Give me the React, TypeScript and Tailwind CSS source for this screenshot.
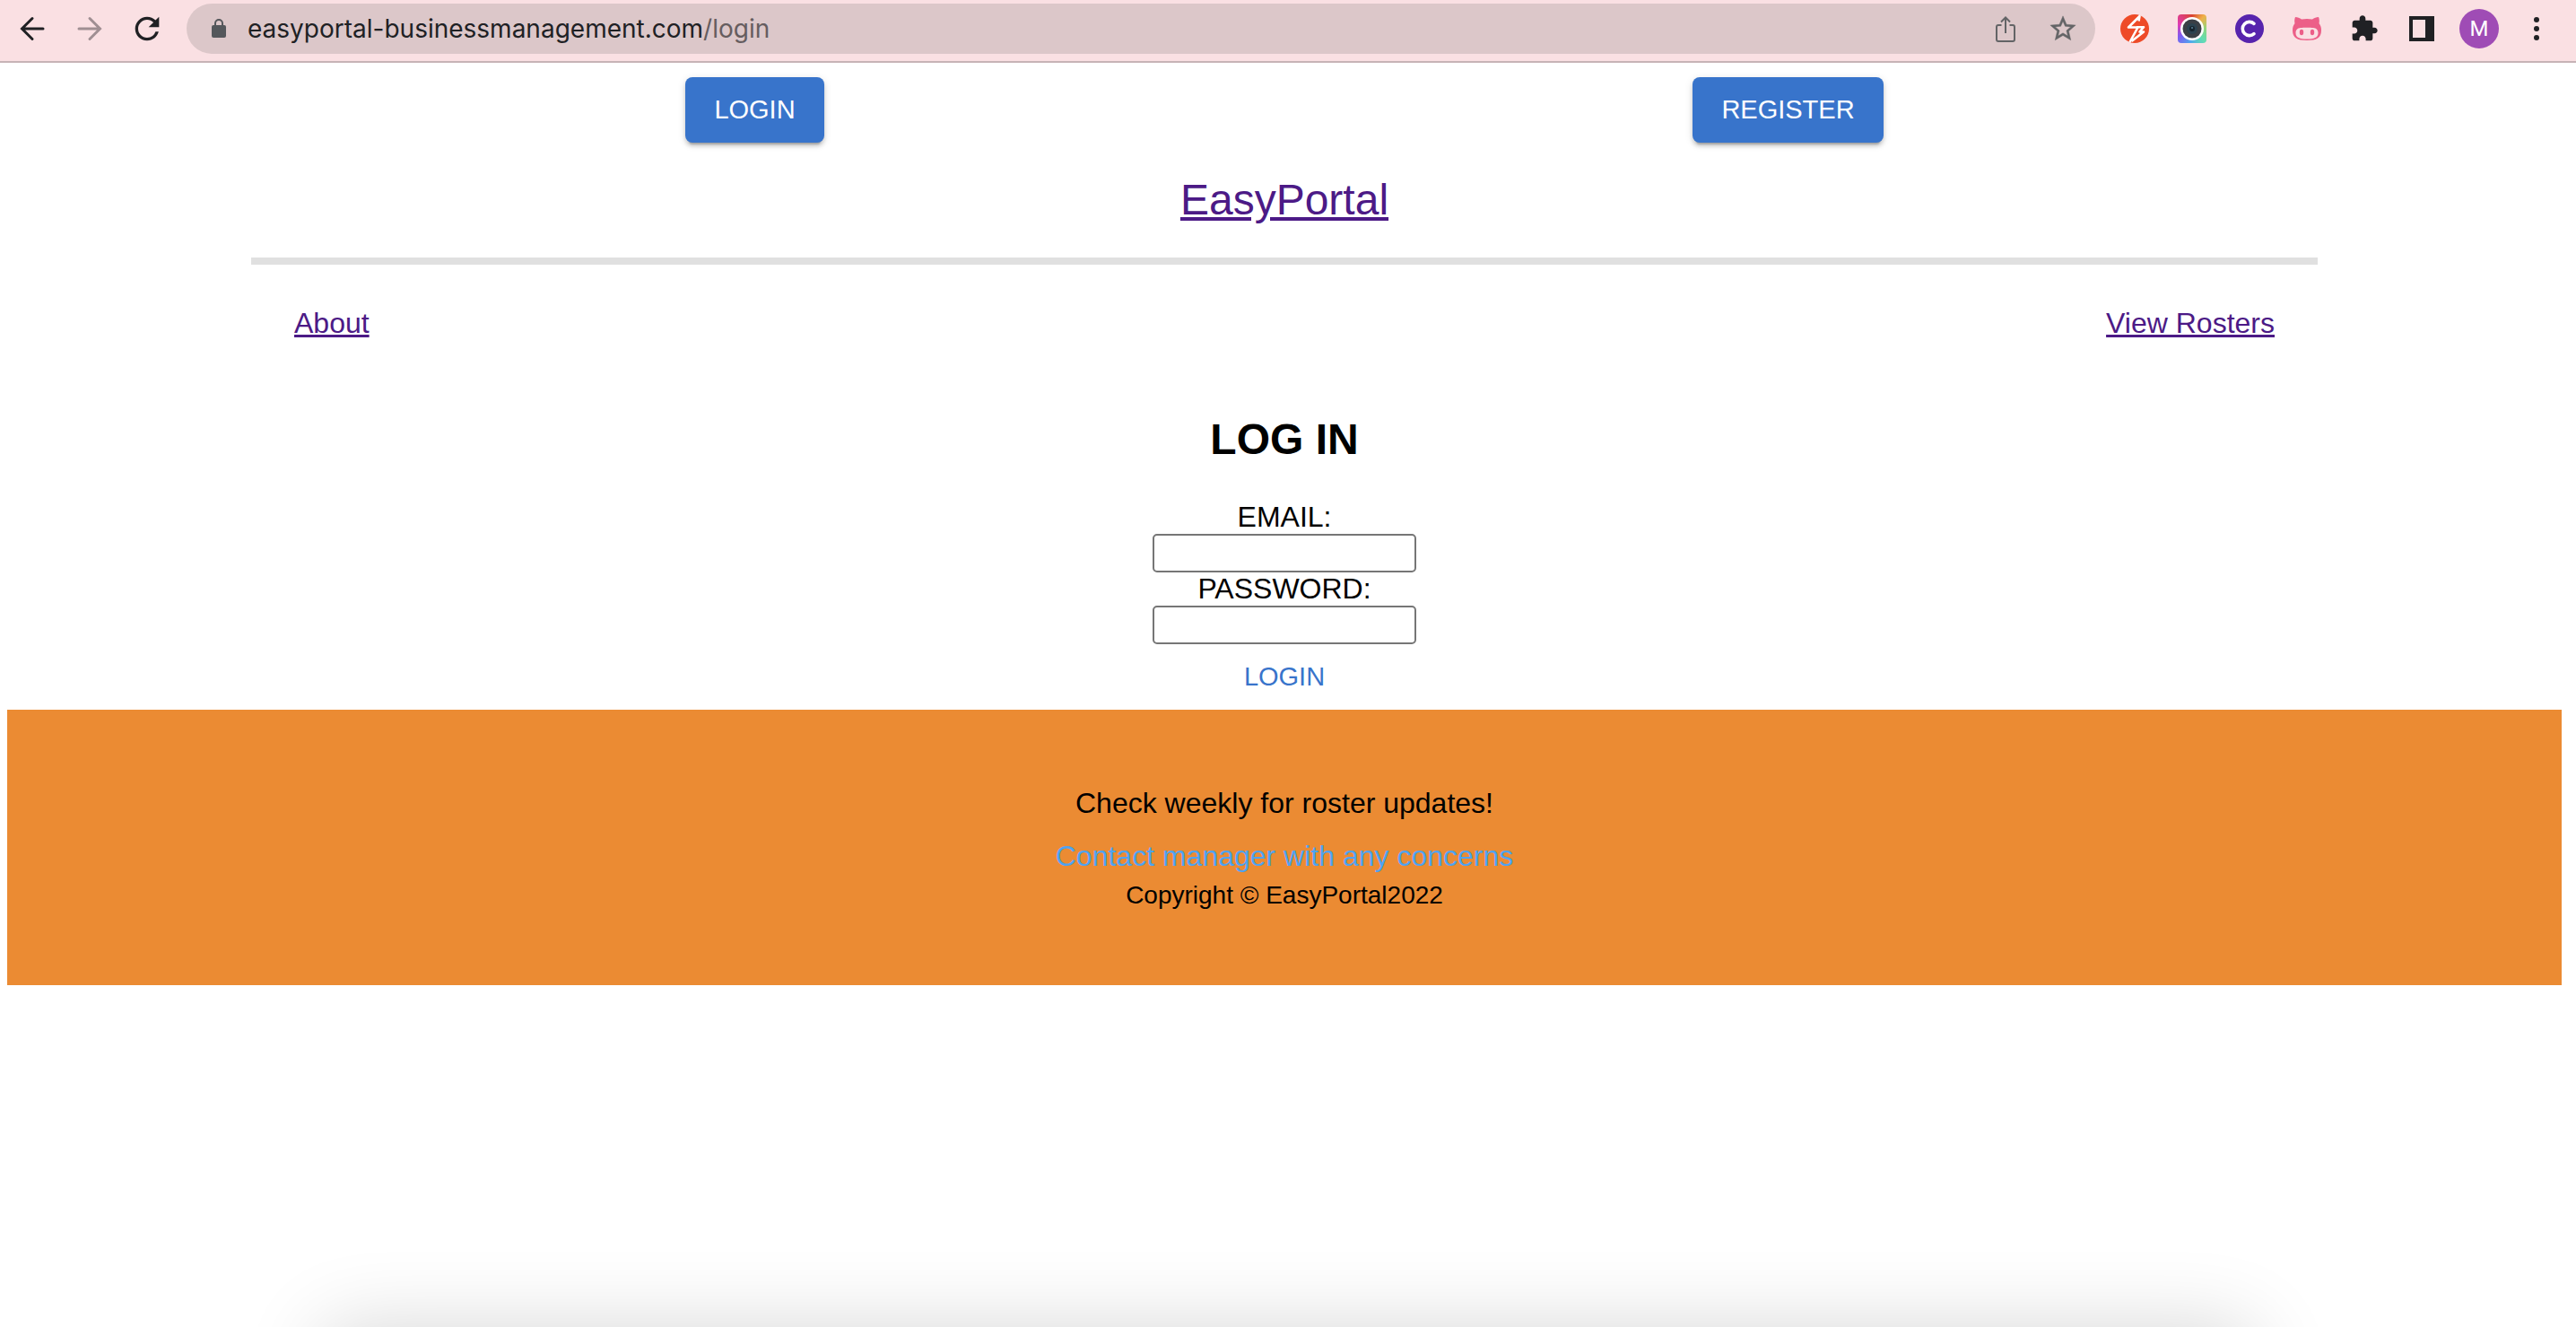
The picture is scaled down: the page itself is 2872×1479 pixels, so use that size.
import type { ReactNode } from "react";

function ToolButton({ label, children }: { label: string; children: ReactNode }) {
  return (
    <button
      type="button"
      aria-label={label}
      className="flex h-14 w-16 shrink-0 items-center justify-center text-[#202124]"
    >
      {children}
    </button>
  );
}

function BackIcon({ flipped = false }: { flipped?: boolean }) {
  return (
    <svg
      viewBox="0 0 32 32"
      className={flipped ? "size-8 rotate-180 text-[#a08f93]" : "size-8"}
      fill="none"
      stroke="currentColor"
      strokeWidth="3"
      strokeLinecap="round"
    >
      <path d="M28 16H5M16 4.500L4.500 16 16 27.500" />
    </svg>
  );
}

function ReloadIcon() {
  return (
    <svg viewBox="0 0 24 24" className="size-10" fill="currentColor">
      <path d="M17.65 6.35A7.96 7.96 0 0 0 12 4c-4.42 0-7.99 3.58-7.99 8s3.57 8 7.99 8c3.73 0 6.84-2.55 7.73-6h-2.08A5.99 5.99 0 0 1 12 18c-3.31 0-6-2.69-6-6s2.69-6 6-6c1.66 0 3.14.69 4.22 1.78L13 11h7V4l-2.35 2.35z" />
    </svg>
  );
}

function LockIcon() {
  return (
    <svg viewBox="0 0 16 22" className="h-[22px] w-4 text-[#54575b]">
      <rect x="0" y="7" width="16" height="14" rx="2" fill="currentColor" />
      <path d="M4 8V5a4 4 0 0 1 8 0v3" fill="none" stroke="currentColor" strokeWidth="2" />
    </svg>
  );
}

function ShareIcon() {
  return (
    <svg
      viewBox="0 0 32 32"
      className="size-8 text-[#636466]"
      fill="none"
      stroke="currentColor"
      strokeWidth="2"
    >
      <path d="M11.5 12H8a2 2 0 0 0-2 2v14a2 2 0 0 0 2 2h16a2 2 0 0 0 2-2V14a2 2 0 0 0-2-2h-3.500M16 21V4M11 8.500l5-5 5 5" />
    </svg>
  );
}

function StarIcon() {
  return (
    <svg
      viewBox="0 0 24 24"
      className="size-[34px] text-[#636466]"
      fill="currentColor"
      stroke="currentColor"
      strokeWidth="0.3"
    >
      <path
        fillRule="evenodd"
        d="M22 9.240l-7.190-.620L12 2 9.190 8.630 2 9.240l5.460 4.730L5.820 21 12 17.270 18.180 21l-1.630-7.030L22 9.240zM12 15.400l-3.760 2.270 1-4.280-3.320-2.880 4.380-.380L12 6.100l1.710 4.040 4.380.380-3.320 2.880 1 4.280L12 15.400z"
      />
    </svg>
  );
}

function SlashBadgeIcon() {
  return (
    <svg viewBox="0 0 32 32" className="size-8">
      <circle cx="16" cy="16" r="16" fill="#ee4b28" />
      <path
        d="M20.500 7.500L21.500 2 9 14.500h10.500L10.500 31M18 14.200h8l-4.500 5.300H26L12.500 30"
        fill="none"
        stroke="#fff"
        strokeWidth="2.6"
        strokeLinejoin="round"
      />
    </svg>
  );
}

function CameraIcon() {
  return (
    <span className="flex size-8 items-center justify-center rounded-sm bg-[conic-gradient(from_0deg,#d9432f,#f0b04a_12%,#8fd67c_25%,#62dcb4_38%,#4fa8ee_52%,#7d5cf0_66%,#e03bb4_80%,#d9432f)]">
      <svg viewBox="0 0 26 26" className="size-[26px]">
        <circle cx="13" cy="13" r="13" fill="#fff" />
        <circle cx="13" cy="13" r="10.500" fill="#3b3f46" />
        <circle cx="13" cy="13" r="6" fill="#2c4250" />
        <circle cx="13" cy="13" r="3" fill="#18242e" />
        <circle cx="13" cy="12" r="1" fill="#5b8298" />
      </svg>
    </span>
  );
}

function LetterCIcon() {
  return (
    <svg viewBox="0 0 32 32" className="size-8">
      <circle cx="16" cy="16" r="16" fill="#5724ad" />
      <path
        d="M21 10.400a7.600 7.600 0 1 0 0 11.200"
        fill="none"
        stroke="#fff"
        strokeWidth="3.600"
        strokeLinecap="round"
      />
    </svg>
  );
}

function CatIcon() {
  return (
    <svg viewBox="0 0 32 32" className="size-8">
      <path
        d="M3 3c2.500 0 5 1 7 2.500 4-.700 8-.700 12 0C24 4 26.500 3 29 3c1 2.500 1 5 .5 7 2 2.500 2.500 5 2.500 8 0 8-5 11-16 11S0 26 0 18c0-3 .500-5.500 2.500-8C2 8 2 5.500 3 3z"
        fill="#ec5f88"
      />
      <path
        d="M9 15c3-.500 11-.500 14 0 3.500.300 5.500 2.500 5.500 5.500 0 5.500-4.500 7-12.500 7S3.500 26 3.500 20.500C3.500 17.500 5.500 15.300 9 15z"
        fill="#fae0e3"
      />
      <ellipse cx="10" cy="20" rx="2.200" ry="3.200" fill="#ec5f88" />
      <ellipse cx="22" cy="20" rx="2.200" ry="3.200" fill="#ec5f88" />
    </svg>
  );
}

function PuzzleIcon() {
  return (
    <svg viewBox="0 0 24 24" className="size-8" fill="currentColor">
      <path d="M20.500 11H19V7c0-1.100-.900-2-2-2h-4V3.500C13 2.120 11.880 1 10.500 1S8 2.120 8 3.500V5H4c-1.100 0-1.990.900-1.990 2v3.800H3.500c1.490 0 2.700 1.210 2.700 2.700s-1.210 2.700-2.700 2.700H2V20c0 1.100.900 2 2 2h3.800v-1.500c0-1.490 1.210-2.700 2.700-2.700 1.490 0 2.700 1.210 2.700 2.700V22H17c1.100 0 2-.900 2-2v-4h1.500c1.380 0 2.500-1.120 2.500-2.500S21.880 11 20.500 11z" />
    </svg>
  );
}

function PanelIcon() {
  return (
    <svg viewBox="0 0 28 28" className="size-7">
      <path d="M0 0h28v28H0zM4 4v20h14V4z" fill="currentColor" fillRule="evenodd" />
    </svg>
  );
}

function MenuIcon() {
  return (
    <svg viewBox="0 0 32 32" className="size-8" fill="currentColor">
      <circle cx="16" cy="6" r="3" />
      <circle cx="16" cy="16" r="3" />
      <circle cx="16" cy="26" r="3" />
    </svg>
  );
}

function BrowserBar() {
  return (
    <header className="flex items-center gap-3 border-b-2 border-[#c7b3b6] bg-[#fae0e3] pt-1 pr-3 pb-2 pl-1">
      <div className="flex">
        <ToolButton label="Back">
          <BackIcon />
        </ToolButton>
        <ToolButton label="Forward">
          <BackIcon flipped />
        </ToolButton>
        <ToolButton label="Reload">
          <ReloadIcon />
        </ToolButton>
      </div>
      <div className="flex h-14 min-w-0 flex-1 items-center rounded-full bg-[#dcc7c9] pr-1 pl-7">
        <LockIcon />
        <p className="ml-6 flex-1 truncate font-[Inter,sans-serif] text-[28px] leading-9 text-[#202124]">
          easyportal-businessmanagement.com
          <span className="text-[#665d5f]">/login</span>
        </p>
        <ToolButton label="Share">
          <ShareIcon />
        </ToolButton>
        <ToolButton label="Bookmark">
          <StarIcon />
        </ToolButton>
      </div>
      <div className="flex">
        <ToolButton label="Slash extension">
          <SlashBadgeIcon />
        </ToolButton>
        <ToolButton label="Camera extension">
          <CameraIcon />
        </ToolButton>
        <ToolButton label="C extension">
          <LetterCIcon />
        </ToolButton>
        <ToolButton label="Cat extension">
          <CatIcon />
        </ToolButton>
        <ToolButton label="Extensions">
          <PuzzleIcon />
        </ToolButton>
        <ToolButton label="Side panel">
          <PanelIcon />
        </ToolButton>
        <ToolButton label="Profile">
          <span className="flex size-11 items-center justify-center rounded-full bg-[#9f4cb5] font-[Roboto,sans-serif] text-2xl text-white">
            M
          </span>
        </ToolButton>
        <ToolButton label="Menu">
          <MenuIcon />
        </ToolButton>
      </div>
    </header>
  );
}

function ContainedButton({ children }: { children: ReactNode }) {
  return (
    <button
      type="button"
      className="rounded-lg bg-[#3874cb] px-8 py-3 text-[29px] leading-[49px] text-white shadow-[0_6px_2px_-4px_rgba(0,0,0,0.2),0_4px_4px_0_rgba(0,0,0,0.14),0_2px_10px_0_rgba(0,0,0,0.12)]"
    >
      {children}
    </button>
  );
}

function Field({ id, label, type }: { id: string; label: string; type: string }) {
  return (
    <>
      <label htmlFor={id} className="text-[32px] leading-[37px]">
        {label}
      </label>
      <input
        id={id}
        type={type}
        className="h-[43px] w-[294px] rounded-[5px] border-2 border-[#767676] bg-white px-1 text-[26px]"
      />
    </>
  );
}

export default function App() {
  return (
    <div className="min-h-screen bg-white font-['Liberation_Sans',Arial,sans-serif] text-black">
      <BrowserBar />
      <div className="pt-4 pr-4 pl-2">
        <div className="mx-auto max-w-[2304px]">
          <div className="flex justify-around">
            <ContainedButton>LOGIN</ContainedButton>
            <ContainedButton>REGISTER</ContainedButton>
          </div>
          <div className="border-b-8 border-[#e0e0e0] py-8 text-center text-5xl leading-[64px]">
            <a href="#home" className="text-[#4c1a86] underline">
              EasyPortal
            </a>
          </div>
          <nav className="flex justify-between px-12 pt-[47px] text-[32px] leading-9 text-[#4c1a86]">
            <a href="#about" className="underline">
              About
            </a>
            <a href="#rosters" className="underline">
              View Rosters
            </a>
          </nav>
        </div>
        <form className="flex flex-col items-center pt-20 pb-3">
          <h1 className="mb-9 text-5xl leading-[64px] font-bold">LOG IN</h1>
          <Field id="email" label="EMAIL:" type="email" />
          <Field id="password" label="PASSWORD:" type="password" />
          <button type="button" className="mt-3 text-[29px] leading-[49px] text-[#3874cb]">
            LOGIN
          </button>
        </form>
        <footer className="bg-[#eb8b33] py-20 text-center text-[32px] leading-[48px]">
          <p>Check weekly for roster updates!</p>
          <p className="mt-[11px]">
            <a href="#contact" className="text-[#4ea3f2]">
              Contact manager with any concerns
            </a>
          </p>
          <p className="text-[28px] leading-10">Copyright © EasyPortal2022</p>
        </footer>
      </div>
      <div className="pointer-events-none fixed inset-x-0 bottom-0 h-32 overflow-hidden">
        <div className="absolute inset-x-[12.5%] top-full h-40 rounded-3xl shadow-[0_0_90px_rgba(0,0,0,0.16)]" />
      </div>
    </div>
  );
}
